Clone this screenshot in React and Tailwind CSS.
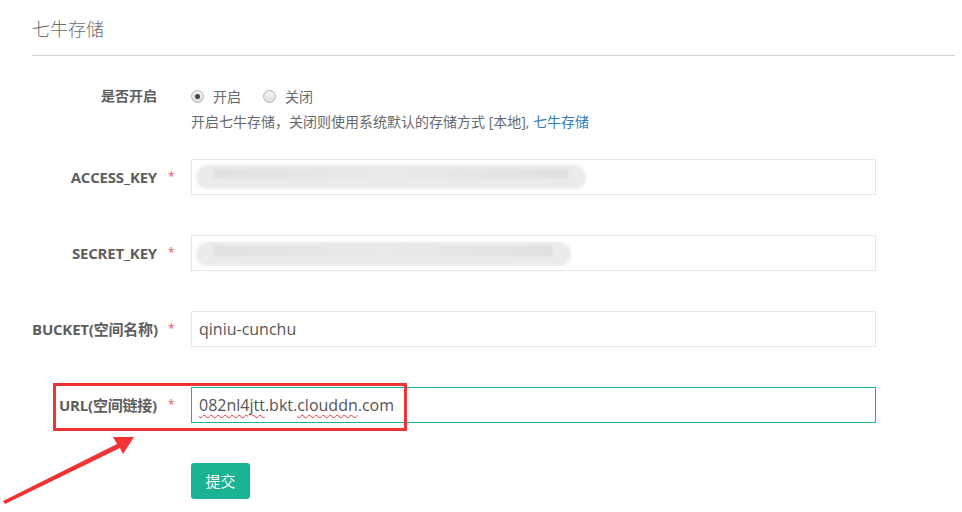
import React from 'react';

const font = { fontFamily: '"Open Sans", "Noto Sans CJK SC", sans-serif' };

function Radio({ checked, label }) {
  return (
    <label className="flex items-center gap-[9px]">
      <span className="w-[13px] h-[13px] rounded-full border border-[#b5b5b5] bg-gradient-to-b from-[#f4f4f4] to-[#dcdcdc] flex items-center justify-center">
        {checked && <span className="w-[5px] h-[5px] rounded-full bg-[#444]" />}
      </span>
      <span className="text-[14px] text-[#676a6c]">{label}</span>
    </label>
  );
}

function Field({ label, children }) {
  return (
    <div className="flex items-center h-[36px]">
      <div className="w-[125px] text-right text-[15px] font-bold text-[#5e5e5e] whitespace-nowrap tracking-[-0.2px]">{label}</div>
      <div className="w-[34px] pl-[11px] text-[#ed5565] text-[12px]">*</div>
      {children}
    </div>
  );
}

function Blur({ width }) {
  return (
    <div className="relative h-[24px]" style={{ width }}>
      <div className="absolute inset-0 rounded-full bg-[#eaebeb] blur-[1px]" />
      <div className="absolute left-[18px] right-[18px] top-[4px] h-[10px] bg-gradient-to-r from-[#e0e1e2] via-[#e9eaea] to-[#dfe0e1] blur-[1px]" />
    </div>
  );
}

export default function App() {
  return (
    <div className="relative w-[962px] h-[512px] bg-white overflow-hidden" style={font}>
      <div className="pl-[32px] pr-[7px]">
        <div className="h-[56px] border-b border-[#d4d4d4] pt-[16px] text-[18px] font-light text-[#6b6b6b]">七牛存储</div>

        <div className="mt-[30px] flex">
          <div className="w-[125px] text-right text-[14px] font-bold text-[#5e5e5e] leading-[20px]">是否开启</div>
          <div className="ml-[34px]">
            <div className="flex items-center gap-[22px] h-[20px]">
              <Radio checked label="开启" />
              <Radio label="关闭" />
            </div>
            <div className="mt-[6px] text-[14px] leading-[20px] text-[#676a6c]">
              开启七牛存储，关闭则使用系统默认的存储方式 [本地], <span className="text-[#337ab7]">七牛存储</span>
            </div>
          </div>
        </div>

        <div className="mt-[27px] flex flex-col gap-[40px]">
          <Field label="ACCESS_KEY">
            <div className="w-[685px] h-[36px] border border-[#e5e6e7] flex items-center pl-[4px]">
              <Blur width={390} />
            </div>
          </Field>
          <Field label="SECRET_KEY">
            <div className="w-[685px] h-[36px] border border-[#e5e6e7] flex items-center pl-[4px] pt-[2px]">
              <Blur width={375} />
            </div>
          </Field>
          <Field label="BUCKET(空间名称)">
            <div className="w-[685px] h-[36px] border border-[#e5e6e7] flex items-center pl-[7px] text-[16px] text-[#555]">qiniu-cunchu</div>
          </Field>
          <Field label="URL(空间链接)">
            <div className="w-[685px] h-[36px] border border-[#1ab394] flex items-center pl-[7px] text-[16px] text-[#555]">
              <span className="underline decoration-wavy decoration-[#e53935] decoration-1 underline-offset-[3px]">082nl4jtt</span>.bkt.<span className="underline decoration-wavy decoration-[#e53935] decoration-1 underline-offset-[3px]">clouddn</span>.com
            </div>
          </Field>
        </div>

        <div className="mt-[40px] ml-[159px]">
          <button className="w-[59px] h-[36px] rounded-[3px] bg-[#1ab394] text-white text-[15px]">提交</button>
        </div>
      </div>

      <div className="absolute left-[53px] top-[383px] w-[354px] h-[48px] border-[3px] border-[#f23333]" />

      <svg className="absolute left-0 top-0" width="962" height="512" viewBox="0 0 962 512">
        <polygon points="3,501 117,444 113,437 134,437 123,454 120,448 5,504" fill="#f23333" />
      </svg>
    </div>
  );
}
